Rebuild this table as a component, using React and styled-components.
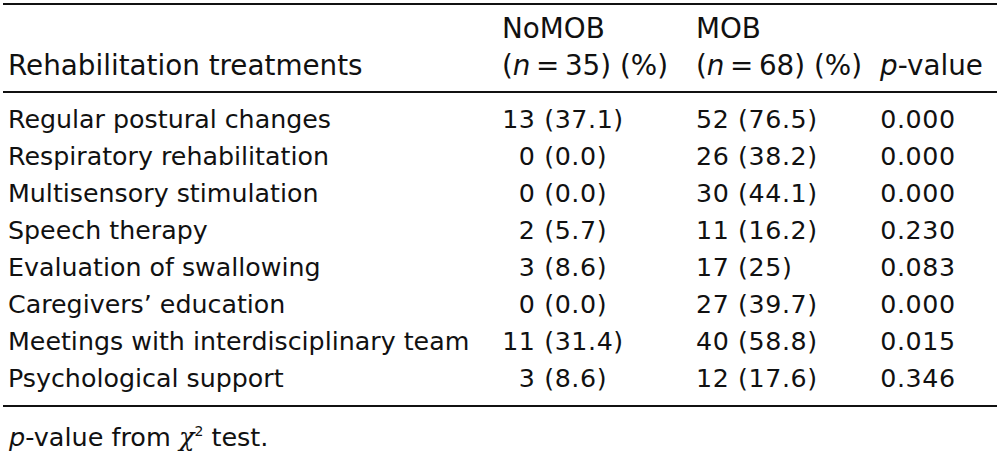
import React from "react";
import styled, { createGlobalStyle } from "styled-components";

const Global = createGlobalStyle`
  html, body { margin: 0; padding: 0; background: #fff; }
  body { font-family: "DejaVu Sans", Verdana, sans-serif; color: #111; }
`;

const Page = styled.div`
  padding: 3px 3px 0 3px;
  width: 994px;
`;

const Table = styled.div`
  border-top: 2px solid #111;
  border-bottom: 2px solid #111;
`;

const Head = styled.div`
  display: grid;
  grid-template-columns: 494px 194px 184px 1fr;
  align-items: end;
  padding: 5px 0 7px 5px;
  border-bottom: 2px solid #111;
  font-size: 27.8px;
  line-height: 37px;
`;

const Body = styled.div`
  padding: 8px 0 8px 5px;
`;

const Row = styled.div`
  display: grid;
  grid-template-columns: 494px 194px 184px 1fr;
  font-size: 25.3px;
  line-height: 37px;
  white-space: nowrap;
`;

const HeadCell = styled.div`
  white-space: nowrap;
`;

const Label = styled.div``;

const Val = styled.div`
  width: ${(p) => p.$w}px;
  text-align: ${(p) => p.$align || "center"};
  letter-spacing: 0.6px;
`;

const I = styled.i`
  font-style: italic;
`;

const Note = styled.div`
  font-size: 25.5px;
  line-height: 37px;
  padding: 12px 0 0 6px;
`;

const Chi = styled.span`
  font-family: "DejaVu Serif", "Liberation Serif", serif;
  font-style: italic;
`;

const Sup = styled.sup`
  font-size: 14px;
  vertical-align: 10px;
  line-height: 0;
`;

const rows = [
  ["Regular postural changes", "13 (37.1)", "52 (76.5)", "0.000"],
  ["Respiratory rehabilitation", "0 (0.0)", "26 (38.2)", "0.000"],
  ["Multisensory stimulation", "0 (0.0)", "30 (44.1)", "0.000"],
  ["Speech therapy", "2 (5.7)", "11 (16.2)", "0.230"],
  ["Evaluation of swallowing", "3 (8.6)", "17 (25)", "0.083"],
  ["Caregivers\u2019 education", "0 (0.0)", "27 (39.7)", "0.000"],
  ["Meetings with interdisciplinary team", "11 (31.4)", "40 (58.8)", "0.015"],
  ["Psychological support", "3 (8.6)", "12 (17.6)", "0.346"],
];

export default function App() {
  return (
    <Page>
      <Global />
      <Table>
        <Head>
          <HeadCell>Rehabilitation treatments</HeadCell>
          <HeadCell>
            NoMOB
            <br />(<I>n</I>{"\u2009=\u2009"}35) (%)
          </HeadCell>
          <HeadCell>
            MOB
            <br />(<I>n</I>{"\u2009=\u2009"}68) (%)
          </HeadCell>
          <HeadCell>
            <I>p</I>-value
          </HeadCell>
        </Head>
        <Body>
          {rows.map((r) => (
            <Row key={r[0]}>
              <Label>{r[0]}</Label>
              <Val $w={122}>{r[1]}</Val>
              <Val $w={122} $align="left">{r[2]}</Val>
              <Val $w={76}>{r[3]}</Val>
            </Row>
          ))}
        </Body>
      </Table>
      <Note>
        <I>p</I>-value from <Chi>χ</Chi>
        <Sup>2</Sup> test.
      </Note>
    </Page>
  );
}
